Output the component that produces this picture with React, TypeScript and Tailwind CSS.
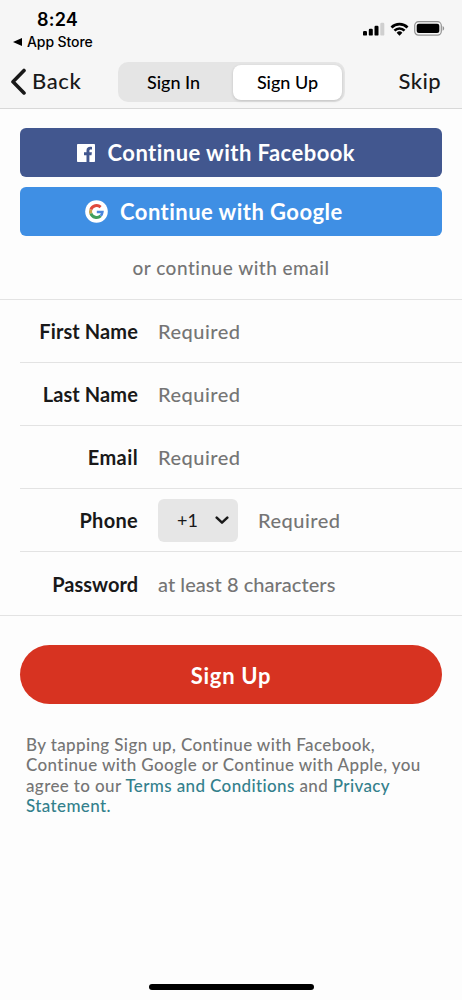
import type { ReactNode } from "react";

type Field = {
  label: string;
  placeholder: string;
  labelClass: string;
  fieldClass: string;
};

const fields: Field[] = [
  { label: "First Name", placeholder: "Required", labelClass: "tracking-[0.1px]", fieldClass: "tracking-[0.5px]" },
  { label: "Last Name", placeholder: "Required", labelClass: "tracking-[0.1px]", fieldClass: "tracking-[0.5px]" },
  { label: "Email", placeholder: "Required", labelClass: "tracking-[0.4px]", fieldClass: "tracking-[0.5px]" },
  { label: "Phone", placeholder: "Required", labelClass: "tracking-[0.3px]", fieldClass: "tracking-[0.5px]" },
  { label: "Password", placeholder: "at least 8 characters", labelClass: "tracking-[0px]", fieldClass: "tracking-[0.05px]" },
];

function SignalIcon() {
  return (
    <svg width="22" height="14" viewBox="0 0 22 14">
      <rect x="0" y="9" width="4" height="4.6" rx="1.2" />
      <rect x="5.8" y="6.8" width="4" height="6.8" rx="1.2" />
      <rect x="11.5" y="3.8" width="4" height="9.8" rx="1.2" />
      <rect x="17.3" y="0.7" width="4" height="12.9" rx="1.2" fill="#cfcfcf" />
    </svg>
  );
}

function WifiIcon() {
  return (
    <svg width="19" height="14" viewBox="0 0 20 15" fill="none" stroke="#000" strokeWidth="2.9">
      <path d="M1.4 5.9a12.2 12.2 0 0 1 17.2 0" />
      <path d="M4.6 9.2a7.6 7.6 0 0 1 10.8 0" />
      <path d="M10 14.6 6.9 11.5a4.4 4.4 0 0 1 6.2 0z" fill="#000" stroke="none" />
    </svg>
  );
}

function BatteryIcon() {
  return (
    <svg width="31" height="15" viewBox="0 0 31 15">
      <rect x="0.7" y="0.7" width="26.6" height="13.4" rx="3.8" fill="none" stroke="#929292" strokeWidth="1.2" />
      <rect x="2.7" y="2.7" width="22.6" height="9.4" rx="2.1" fill="#000" />
      <path d="M28.6 5.1c1.1.6 1.5 1.3 1.5 2.3s-.4 1.7-1.5 2.3z" fill="#929292" />
    </svg>
  );
}

function FacebookIcon() {
  return (
    <svg width="18" height="18" viewBox="0 0 18 18">
      <rect width="18" height="18" rx="0.8" fill="#fff" />
      <path
        d="M9.5 18v-6.7H7V8.3h2.5V6.5c0-2.5 1.5-3.7 3.7-3.7.8 0 1.5.1 1.8.1v2.5h-1.3c-1 0-1.3.6-1.3 1.3v1.6h2.5l-.4 3h-2.1V18z"
        fill="#42578f"
      />
    </svg>
  );
}

function GoogleIcon() {
  return (
    <svg width="23" height="23" viewBox="0 0 23 23" fill="none" strokeWidth="3">
      <circle cx="11.5" cy="11.5" r="11.3" fill="#fff" />
      <path d="M5.9 13.6a6 6 0 0 1 0-4.2" stroke="#c9a24a" />
      <path d="M15.6 7.1A6 6 0 0 0 5.9 9.6" stroke="#e0493c" />
      <path d="M5.9 13.4a6 6 0 0 0 9.7 2.5" stroke="#3f9f5c" />
      <path d="M15.6 15.9a6 6 0 0 0 1.8-3.9h-5.6" stroke="#4a86dc" strokeWidth="2.6" />
    </svg>
  );
}

function FormRow({ last, children }: { last?: boolean; children: ReactNode }) {
  return (
    <div className={last ? "flex h-[63px] items-center" : "ml-5 flex h-[63px] items-center border-b border-[#e3e3e3]"}>
      {children}
    </div>
  );
}

export default function App() {
  return (
    <div className="flex h-[1000px] w-[462px] flex-col overflow-hidden bg-[#fdfdfd] font-['Lato',sans-serif] font-medium text-[#191919]">
      {/* Status bar + navigation */}
      <header className="flex h-[109px] flex-col border-b border-[#d8d8d8] bg-[#f6f6f6]">
        <div className="flex h-[56px] items-start justify-between pr-[17px] pl-[13px] font-['Inter',sans-serif] text-black">
          <div className="flex flex-col">
            <span className="mt-[8px] ml-6 text-[18px] leading-[23px] font-semibold tracking-[0.2px]">8:24</span>
            <span className="mt-[2px] flex items-center gap-[5px] text-[14px] leading-[18px] font-medium tracking-[-0.1px]">
              <svg width="9" height="8" viewBox="0 0 9 8">
                <path d="M0 4 9 0v8z" />
              </svg>
              App Store
            </span>
          </div>
          <div className="flex items-center gap-[5px] pt-[21px]">
            <SignalIcon />
            <WifiIcon />
            <BatteryIcon />
          </div>
        </div>

        <div className="flex h-[52px] items-center justify-between pr-[21px] pl-[10px]">
          <button className="flex w-[108px] items-center gap-[5px] text-[22px] tracking-[0.6px]">
            <svg width="17" height="28" viewBox="0 0 17 28" fill="none" stroke="currentColor" strokeWidth="3.6" strokeLinecap="round" strokeLinejoin="round">
              <path d="M14 2.5 3 13.7 14 24.9" />
            </svg>
            <span className="-mt-[3px]">Back</span>
          </button>
          <div className="flex h-[40px] w-[227px] items-center rounded-[10px] bg-[#e5e5e5] p-[3px] text-[18px] text-black">
            <button className="h-full w-[112px] pt-px pr-[7px]">Sign In</button>
            <button className="h-[35px] w-[109px] rounded-[8px] bg-white pt-px shadow-[0_1px_3px_rgba(0,0,0,0.16)]">
              Sign Up
            </button>
          </div>
          <button className="-mt-[3px] w-[96px] text-right text-[22px] tracking-[0.4px]">Skip</button>
        </div>
      </header>

      {/* Social buttons */}
      <div className="flex flex-col gap-[10px] px-5 pt-[19px]">
        <button className="flex h-[49px] items-center rounded-[6px] bg-[#42578f] pl-[57px] text-[22px] font-bold text-white">
          <FacebookIcon />
          <span className="ml-[12.5px] tracking-[0.46px] whitespace-nowrap">Continue with Facebook</span>
        </button>
        <button className="flex h-[49px] items-center rounded-[6px] bg-[#3f8fe4] pl-[65px] text-[22px] font-bold text-white">
          <GoogleIcon />
          <span className="ml-[12px] tracking-[0.46px] whitespace-nowrap">Continue with Google</span>
        </button>
      </div>

      <p className="flex h-[63px] items-center justify-center pt-[2px] text-[19px] tracking-[0.5px] text-[#757575]">or continue with email</p>

      {/* Form */}
      <form className="border-y border-[#e3e3e3]">
        {fields.map((field, i) => (
          <FormRow key={field.label} last={i === fields.length - 1}>
            <label className={`${i === fields.length - 1 ? "w-[138px]" : "w-[118px]"} shrink-0 text-right text-[20px] font-bold ${field.labelClass}`}>
              {field.label}
            </label>
            {field.label === "Phone" && (
              <div className="ml-5 flex h-[43px] w-[80px] items-center justify-between rounded-[6px] bg-[#e6e6e6] pr-[9px] pl-[19px] text-[18px] font-normal">
                +1
                <svg width="14" height="9" viewBox="0 0 14 9" fill="none" stroke="currentColor" strokeWidth="2.5" strokeLinecap="round" strokeLinejoin="round">
                  <path d="m1.7 1.7 5.3 5 5.3-5" />
                </svg>
              </div>
            )}
            <span className={`ml-5 text-[20px] text-[#757575] ${field.fieldClass}`}>{field.placeholder}</span>
          </FormRow>
        ))}
      </form>

      <div className="px-5 pt-[29px]">
        <button className="h-[59px] w-full rounded-full bg-[#d73321] pt-[2px] text-[22px] font-bold tracking-[0.7px] text-white">Sign Up</button>
      </div>

      <p className="mt-[31px] ml-[26px] text-[17px] leading-[20.3px] tracking-[0.38px] whitespace-nowrap text-[#757575]">
        By tapping Sign up, Continue with Facebook,
        <br />
        Continue with Google or Continue with Apple, you
        <br />
        agree to our <a className="text-[#33808c]">Terms and Conditions</a> and <a className="text-[#33808c]">Privacy</a>
        <br />
        <a className="text-[#33808c]">Statement.</a>
      </p>

      {/* Home indicator */}
      <div className="mt-auto mb-[10px] h-[6px] w-[165px] self-center rounded-full bg-black" />
    </div>
  );
}
